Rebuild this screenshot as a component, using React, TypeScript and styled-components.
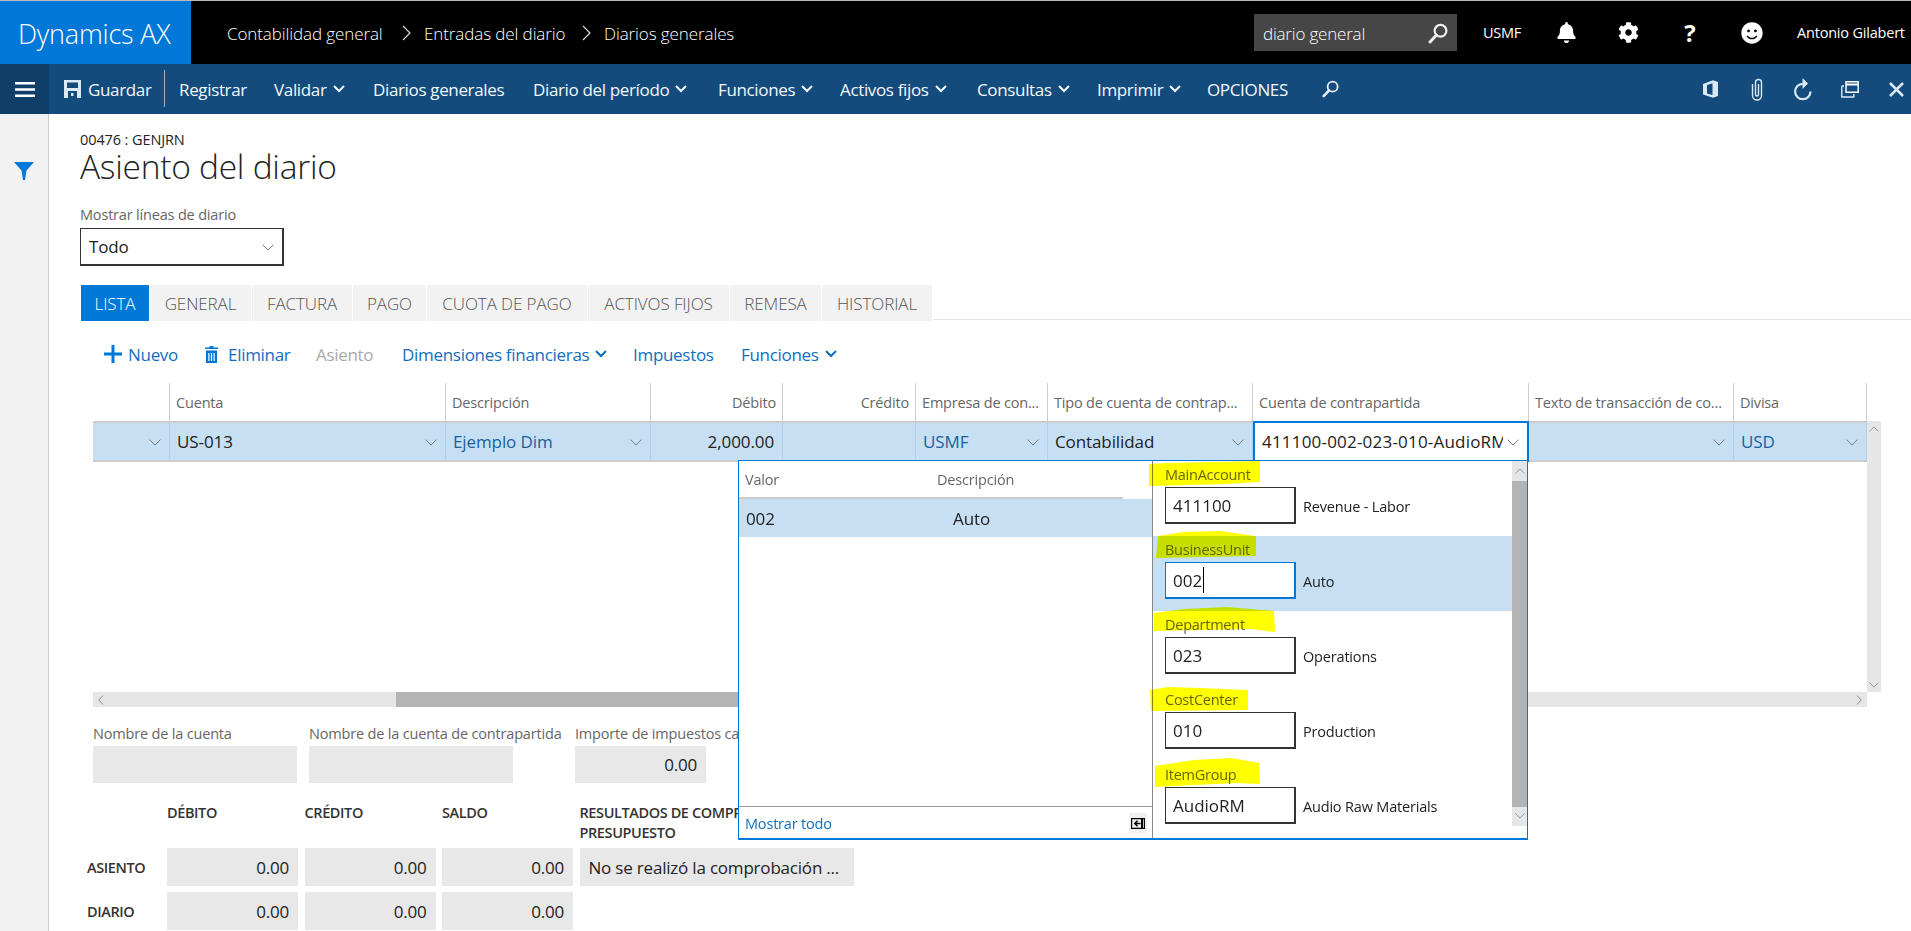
import React from 'react'
import { styled, createGlobalStyle } from 'styled-components'
import { FaBell, FaCog, FaSmile } from 'react-icons/fa'

const font = `'Open Sans', 'Noto Sans', 'Liberation Sans', sans-serif`
const blue = '#0078d7'
const link = '#106ebe'
const selected = '#c7dff3'
const navIcon = '#dbe9f7'

const GlobalStyle = createGlobalStyle`
  html, body {
    margin: 0;
    padding: 0;
    height: 931px;
    overflow: hidden;
    background: #fff;
    font-family: ${font};
    color: #222;
  }
  * { box-sizing: border-box; }
  svg { display: block; flex: none; }
`

/* barra superior */
const TopBar = styled.header`
  display: flex;
  align-items: stretch;
  height: 64px;
  background: #000;
  border-top: 1px solid #bbb;
  color: #fff;
`
const Logo = styled.div`
  width: 191px;
  display: flex;
  align-items: center;
  padding: 1px 0 0 18px;
  background: ${blue};
  font-size: 27px;
  font-weight: 300;
  letter-spacing: -0.2px;
  white-space: nowrap;
`
const Breadcrumb = styled.nav`
  display: flex;
  align-items: center;
  padding: 1px 0 0 36px;
  font-size: 17px;
  font-weight: 300;
  letter-spacing: -0.1px;
  white-space: nowrap;
`
const Crumb = styled.span<{ $w: number }>`
  width: ${(p) => p.$w}px;
`
const CrumbSep = styled.span`
  width: 36px;
  display: flex;
  justify-content: center;
`
const TopRight = styled.div`
  margin-left: auto;
  display: flex;
  align-items: center;
`
const SearchBox = styled.div`
  width: 203px;
  height: 37px;
  margin-right: 26px;
  padding: 1px 9px 0;
  display: flex;
  align-items: center;
  justify-content: space-between;
  background: #464646;
  font-size: 17px;
  font-weight: 300;
  letter-spacing: -0.2px;
`
const Company = styled.span`
  width: 52px;
  font-size: 14.5px;
  letter-spacing: -0.3px;
`
const TopIcon = styled.span`
  width: 62px;
  display: flex;
  justify-content: center;
  font-size: 24px;
  font-weight: 700;
  line-height: 1;
`
const UserName = styled.span`
  width: 128px;
  padding-left: 14px;
  font-size: 14.5px;
  letter-spacing: -0.2px;
  white-space: nowrap;
`

/* barra de comandos */
const CommandBar = styled.div`
  display: flex;
  align-items: stretch;
  height: 50px;
  background: #124b7c;
  color: #f4f8fc;
  font-size: 17px;
  letter-spacing: -0.35px;
  white-space: nowrap;
`
const MenuTile = styled.div`
  width: 49px;
  display: flex;
  align-items: center;
  justify-content: center;
  background: #0f3f69;
`
const SaveGroup = styled.div`
  display: flex;
  align-items: center;
  gap: 7px;
  padding: 0 14px 0 15px;
  width: 115px;
`
const BarDivider = styled.div`
  width: 1px;
  margin: 6px 0 7px;
  background: #9db5cb;
`
const Commands = styled.div`
  display: flex;
  align-items: center;
  padding-left: 14px;
`
const Command = styled.span<{ $w: number }>`
  width: ${(p) => p.$w}px;
  display: flex;
  align-items: center;
  gap: 6px;
`
const WindowTools = styled.div`
  margin-left: auto;
  display: flex;
  align-items: center;
  gap: 16.3px;
`
const ToolSlot = styled.span`
  width: 30px;
  display: flex;
  justify-content: center;
`

/* cuerpo */
const Body = styled.div`
  display: flex;
  height: 817px;
  overflow: hidden;
`
const Sidebar = styled.aside`
  width: 49px;
  flex: none;
  padding: 48px 0 0 14px;
  background: #f2f2f2;
  border-right: 1px solid #ccc;
`
const Main = styled.main`
  flex: 1;
  min-width: 0;
  padding-top: 17px;
`
const Head = styled.div`
  padding-left: 31px;
`
const RecordId = styled.div`
  font-size: 14.5px;
  line-height: 18px;
  letter-spacing: -0.1px;
`
const Title = styled.h1`
  margin: 0;
  font-size: 33.5px;
  font-weight: 300;
  line-height: 34px;
  letter-spacing: -0.25px;
`
const FieldLabel = styled.div`
  color: #666;
  font-size: 14.5px;
  line-height: 20px;
  letter-spacing: -0.18px;
  white-space: nowrap;
`
const FilterLabel = styled(FieldLabel)`
  margin-top: 22px;
`
const FilterSelect = styled.div`
  width: 204px;
  height: 38px;
  margin-top: 3px;
  padding: 0 8px 0 8px;
  display: flex;
  align-items: center;
  justify-content: space-between;
  border: 1px solid #333;
  border-width: 1px 2px 2px 1px;
  font-size: 17px;
  letter-spacing: -0.2px;
`
const TabStrip = styled.div`
  display: flex;
  width: 1831px;
  height: 36px;
  margin: 19px 0 0 32px;
  gap: 1px;
`
const Tab = styled.div<{ $w: number; $active?: boolean }>`
  width: ${(p) => p.$w}px;
  display: flex;
  align-items: center;
  justify-content: center;
  background: ${(p) => (p.$active ? blue : '#f2f2f2')};
  color: ${(p) => (p.$active ? '#fff' : '#555')};
  font-size: 17px;
  font-weight: 300;
  letter-spacing: -0.1px;
  white-space: nowrap;
`
const TabRule = styled.div`
  flex: 1;
  align-self: flex-end;
  height: 1px;
  margin-bottom: 1px;
  background: #e6e6e6;
`
const ActionBar = styled.div`
  display: flex;
  align-items: center;
  height: 36px;
  margin: 15px 0 0 55px;
  color: ${link};
  font-size: 17px;
  letter-spacing: -0.3px;
  white-space: nowrap;
`
const Action = styled.span<{ $w: number; $off?: boolean; $gap?: number }>`
  width: ${(p) => p.$w}px;
  display: flex;
  align-items: center;
  gap: ${(p) => p.$gap ?? 6}px;
  color: ${(p) => (p.$off ? '#aaa' : 'inherit')};
`

/* rejilla */
const columns = '77px 276px 205px 132px 133px 132px 205px 276px 205px 133px'

const GridFrame = styled.div`
  position: relative;
  width: 1788px;
  margin: 11px 0 0 44px;
`
const GridHeader = styled.div`
  display: grid;
  grid-template-columns: ${columns};
  height: 38px;
  width: 1774px;
`
const HeadCell = styled.div<{ $right?: boolean }>`
  display: flex;
  align-items: center;
  justify-content: ${(p) => (p.$right ? 'flex-end' : 'flex-start')};
  padding: 0 6px;
  border-right: 1px solid #ccc;
  color: #666;
  font-size: 14.5px;
  letter-spacing: -0.18px;
  white-space: nowrap;
  overflow: hidden;
`
const GridBody = styled.div`
  display: flex;
  height: 271px;
`
const GridRows = styled.div`
  width: 1774px;
`
const Row = styled.div`
  display: grid;
  grid-template-columns: ${columns};
  height: 41px;
  background: ${selected};
  border-top: 2px solid #ccc;
  border-bottom: 2px solid #ccc;
`
const Cell = styled.div<{ $active?: boolean; $link?: boolean; $right?: boolean }>`
  display: flex;
  align-items: center;
  justify-content: ${(p) => (p.$right ? 'flex-end' : 'space-between')};
  gap: 4px;
  min-width: 0;
  padding: 0 8px 0 7px;
  border-right: 1px solid #b5cfe5;
  color: ${(p) => (p.$link ? '#1a5f9e' : '#222')};
  font-size: 17px;
  letter-spacing: -0.1px;
  white-space: nowrap;
  ${(p) => p.$active && `
    margin: -2px 0;
    background: #fff;
    border: 2px solid ${blue};
    padding-left: 7px;
    letter-spacing: 0.2px;
  `}
`
const CellText = styled.span`
  flex: 1;
  min-width: 0;
  overflow: hidden;
`
const DropSlot = styled.span`
  padding-top: 3px;
  flex: none;
`
const VScroll = styled.div`
  width: 14px;
  height: 100%;
  padding: 5px 0 4px;
  background: #e6e6e6;
  display: flex;
  flex-direction: column;
  align-items: center;
  justify-content: space-between;
`
const HScroll = styled.div`
  display: flex;
  align-items: center;
  justify-content: space-between;
  width: 1774px;
  height: 15px;
  padding: 0 5px;
  background: linear-gradient(to right, #e6e6e6 303px, #b4b4b4 303px, #b4b4b4 1100px, #e6e6e6 1100px);
`

/* pie */
const NameFields = styled.div`
  display: grid;
  grid-template-columns: 204px 204px 181px;
  column-gap: 12px;
  margin: 17px 0 0 44px;
  & > div:last-child {
    margin-left: 50px;
    width: 131px;
  }
`
const ReadOnly = styled.div`
  height: 37px;
  margin-top: 2px;
  padding: 0 9px;
  display: flex;
  align-items: center;
  justify-content: flex-end;
  background: #e8e8e8;
  font-size: 17px;
  letter-spacing: -0.2px;
  white-space: nowrap;
  overflow: hidden;
`
const Totals = styled.div`
  display: grid;
  grid-template-columns: 73.5px 131px 131px 131px 274px;
  column-gap: 6.5px;
  row-gap: 6px;
  margin: 20px 0 0 38px;
  width: 780px;
`
const TotalHead = styled.div`
  height: 40px;
  margin-bottom: -1px;
  color: #333;
  font-size: 14.5px;
  font-weight: 600;
  line-height: 20px;
  letter-spacing: -0.4px;
`
const TotalLabel = styled.div`
  display: flex;
  align-items: center;
  color: #333;
  font-size: 14.5px;
  font-weight: 600;
  letter-spacing: -0.4px;
`
const TotalBox = styled(ReadOnly)<{ $left?: boolean }>`
  height: 38px;
  margin-top: 0;
  justify-content: ${(p) => (p.$left ? 'flex-start' : 'flex-end')};
`

/* desplegable de dimensiones */
const Flyout = styled.div`
  position: absolute;
  z-index: 5;
  left: 645px;
  top: 77px;
  width: 790px;
  height: 380px;
  display: flex;
  background: #fff;
  border: 1px solid ${blue};
  border-bottom-width: 2px;
`
const LookupPane = styled.div`
  width: 414px;
  display: flex;
  flex-direction: column;
  border-right: 1px solid #888;
`
const LookupHead = styled.div`
  display: grid;
  grid-template-columns: 192px 1fr;
  width: 384px;
  height: 38px;
  padding: 9px 0 0 6px;
  border-bottom: 2px solid #ccc;
  color: #666;
  font-size: 14.5px;
  letter-spacing: -0.18px;
`
const LookupRow = styled.div`
  display: grid;
  grid-template-columns: 207px 1fr;
  height: 38px;
  align-items: center;
  padding-left: 7px;
  background: ${selected};
  font-size: 17px;
  letter-spacing: -0.1px;
`
const LookupFoot = styled.div`
  margin-top: auto;
  height: 32px;
  display: flex;
  align-items: center;
  justify-content: space-between;
  padding: 1px 5px 0 6px;
  border-top: 1px solid #999;
  color: ${link};
  font-size: 14.5px;
  letter-spacing: -0.18px;
`
const PinButton = styled.span`
  width: 18px;
  height: 20px;
  display: flex;
  align-items: center;
  justify-content: center;
  background: #f0f0f0;
`
const SegmentPane = styled.div`
  position: relative;
  flex: 1;
  display: flex;
`
const Segments = styled.div`
  flex: 1;
  min-width: 0;
`
const Segment = styled.div<{ $current?: boolean }>`
  height: 75px;
  padding: 4px 0 0 12px;
  background: ${(p) => (p.$current ? selected : 'transparent')};
`
const SegmentLabel = styled.div`
  color: #666;
  font-size: 14.5px;
  line-height: 20px;
  letter-spacing: -0.25px;
`
const SegmentRow = styled.div`
  display: flex;
  align-items: center;
  gap: 7px;
  margin-top: 2px;
`
const SegmentInput = styled.div<{ $current?: boolean }>`
  width: 131px;
  height: 37px;
  padding: 0 7px;
  display: flex;
  align-items: center;
  background: #fff;
  border: 1px solid ${(p) => (p.$current ? blue : '#333')};
  border-width: 1px 2px 2px 1px;
  font-size: 17px;
  letter-spacing: 0;
`
const Caret = styled.span`
  width: 1px;
  height: 26px;
  margin-left: 1px;
  background: #000;
`
const SegmentName = styled.span`
  padding-top: 2px;
  font-size: 14.5px;
  letter-spacing: -0.18px;
`
const PaneScroll = styled.div`
  width: 15px;
  height: 365px;
  display: flex;
  flex-direction: column;
  background: #e6e6e6;
`
const PaneThumb = styled.div`
  height: 326px;
  background: #b4b4b4;
`
const ArrowSlot = styled.div`
  flex: 1;
  display: flex;
  align-items: center;
  justify-content: center;
`
const Marker = styled.svg`
  position: absolute;
  left: -4px;
  top: 0;
  mix-blend-mode: multiply;
  pointer-events: none;
`

/* iconos */
const Chevron = ({ color = '#777', size = 12 }: { color?: string; size?: number }) => (
  <svg width={size} height={size * 0.6} viewBox="0 0 12 7">
    <path d="M.5.5 6 6l5.5-5.5" fill="none" stroke={color} strokeWidth="1" />
  </svg>
)
const ChevronUp = () => (
  <svg width="10" height="6" viewBox="0 0 12 7">
    <path d="M.5 6.5 6 1l5.5 5.500" fill="none" stroke="#888" strokeWidth="1" />
  </svg>
)
const BoldChevron = ({ color = '#f4f8fc' }: { color?: string }) => (
  <svg width="12" height="8" viewBox="0 0 12 8">
    <path d="M1 1l5 5 5-5" fill="none" stroke={color} strokeWidth="2" />
  </svg>
)
const CrumbArrow = () => (
  <svg width="9" height="16" viewBox="0 0 9 16">
    <path d="M1 1l7 7-7 7" fill="none" stroke="#ddd" strokeWidth="1.2" />
  </svg>
)
const Magnifier = ({ color = '#eee', size = 20 }: { color?: string; size?: number }) => (
  <svg width={size} height={size * 1.05} viewBox="0 0 20 21">
    <circle cx="12.5" cy="7.8" r="5.9" fill="none" stroke={color} strokeWidth="2.2" />
    <path d="M8.3 12.2 2 19" stroke={color} strokeWidth="3" strokeLinecap="round" />
  </svg>
)
const Hamburger = () => (
  <svg width="20" height="15" viewBox="0 0 20 15">
    <path d="M0 1.2h20M0 7.5h20M0 13.8h20" stroke="#fff" strokeWidth="2.4" />
  </svg>
)
const SaveIcon = () => (
  <svg width="17" height="18" viewBox="0 0 17 18">
    <path
      fillRule="evenodd"
      fill={navIcon}
      d="M0 0h17v18H0zM3 2.5V8h11V2.5zM4 11v7h9v-7zM7 13v3h2.5v-3z"
    />
  </svg>
)
const OfficeIcon = () => (
  <svg width="15" height="18" viewBox="0 0 15 18">
    <path fillRule="evenodd" fill={navIcon} d="M0 4 10 .3l5 1.7v14l-5 1.7L0 14.5zM9.5 3.3 4 5v8.5l5.5 1.4z" />
  </svg>
)
const ClipIcon = () => (
  <svg width="12" height="23" viewBox="0 0 12 23">
    <path
      d="M7.5 6v10.5a1.5 1.5 0 0 1-3 0V4.5a3 3 0 0 1 6 0v13a4.5 4.5 0 0 1-9 0V6"
      fill="none"
      stroke={navIcon}
      strokeWidth="1.4"
    />
  </svg>
)
const RefreshIcon = () => (
  <svg width="20" height="23" viewBox="0 0 20 23">
    <path d="M17.5 13.5a7.7 7.7 0 1 1-7.7-7.7" fill="none" stroke={navIcon} strokeWidth="2.2" />
    <path d="M9.5 0l5.5 5.5-5.5 5.5z" fill={navIcon} />
  </svg>
)
const WindowIcon = () => (
  <svg width="18" height="17" viewBox="0 0 18 17">
    <path d="M5 .8h12.2v10.5H5z" fill="none" stroke="#fff" strokeWidth="1.5" />
    <path d="M5 2.5h12v2H5z" fill="#fff" />
    <path d="M.8 5v11h12V13M.8 5H3" fill="none" stroke={navIcon} strokeWidth="1.4" />
  </svg>
)
const CloseIcon = () => (
  <svg width="15" height="15" viewBox="0 0 15 15">
    <path d="M1 1l13 13M14 1 1 14" stroke={navIcon} strokeWidth="2.6" />
  </svg>
)
const FunnelIcon = () => (
  <svg width="20" height="18" viewBox="0 0 20 18">
    <path d="M0 0h20l-7.5 8.5-1.5 9.5H9L7.5 8.5z" fill={blue} />
  </svg>
)
const PlusIcon = () => (
  <svg width="18" height="18" viewBox="0 0 18 18">
    <path d="M9 0v18M0 9h18" stroke={blue} strokeWidth="3" />
  </svg>
)
const TrashIcon = () => (
  <svg width="13" height="17" viewBox="0 0 13 17">
    <path
      fillRule="evenodd"
      fill={blue}
      d="M4.5 0h4v1.5H13V3H0V1.5h4.5zM1 4.5h11V17H1zM3.3 7v8h1.2V7zM5.9 7v8h1.2V7zM8.5 7v8h1.2V7z"
    />
  </svg>
)
const PinIcon = () => (
  <svg width="14" height="11" viewBox="0 0 14 11">
    <path d="M.6.6h12.8v9.8H.6z" fill="none" stroke="#000" strokeWidth="1.2" />
    <path d="M11 1v9" stroke="#000" strokeWidth="2" />
    <path d="M9.5 5.5H4M6.5 2.8 3.800 5.500l2.700 2.700" fill="none" stroke="#000" strokeWidth="1.5" />
  </svg>
)
const DropMark = () => (
  <DropSlot>
    <Chevron />
  </DropSlot>
)

const tabs: [string, number][] = [
  ['LISTA', 68],
  ['GENERAL', 101],
  ['FACTURA', 100],
  ['PAGO', 73],
  ['CUOTA DE PAGO', 160],
  ['ACTIVOS FIJOS', 141],
  ['REMESA', 91],
  ['HISTORIAL', 110],
]

const commands: [string, number, boolean][] = [
  ['Registrar', 95, false],
  ['Validar', 99, true],
  ['Diarios generales', 160, false],
  ['Diario del período', 185, true],
  ['Funciones', 122, true],
  ['Activos fijos', 137, true],
  ['Consultas', 120, true],
  ['Imprimir', 110, true],
  ['OPCIONES', 115, false],
]

const headers: [string, boolean?][] = [
  [''],
  ['Cuenta'],
  ['Descripción'],
  ['Débito', true],
  ['Crédito', true],
  ['Empresa de con...'],
  ['Tipo de cuenta de contrap...'],
  ['Cuenta de contrapartida'],
  ['Texto de transacción de co...'],
  ['Divisa'],
]

const segments = [
  { label: 'MainAccount', value: '411100', name: 'Revenue - Labor' },
  { label: 'BusinessUnit', value: '002', name: 'Auto', current: true },
  { label: 'Department', value: '023', name: 'Operations' },
  { label: 'CostCenter', value: '010', name: 'Production' },
  { label: 'ItemGroup', value: 'AudioRM', name: 'Audio Raw Materials' },
]

const App = () => {
  return (
    <>
      <GlobalStyle />
      <TopBar>
        <Logo>Dynamics AX</Logo>
        <Breadcrumb>
          <Crumb $w={161}>Contabilidad general</Crumb>
          <CrumbSep>
            <CrumbArrow />
          </CrumbSep>
          <Crumb $w={144}>Entradas del diario</Crumb>
          <CrumbSep>
            <CrumbArrow />
          </CrumbSep>
          <Crumb $w={132}>Diarios generales</Crumb>
        </Breadcrumb>
        <TopRight>
          <SearchBox>
            diario general
            <Magnifier />
          </SearchBox>
          <Company>USMF</Company>
          <TopIcon>
            <FaBell size={21} />
          </TopIcon>
          <TopIcon>
            <FaCog size={21} />
          </TopIcon>
          <TopIcon>?</TopIcon>
          <TopIcon>
            <FaSmile size={22} />
          </TopIcon>
          <UserName>Antonio Gilabert</UserName>
        </TopRight>
      </TopBar>

      <CommandBar>
        <MenuTile>
          <Hamburger />
        </MenuTile>
        <SaveGroup>
          <SaveIcon />
          Guardar
        </SaveGroup>
        <BarDivider />
        <Commands>
          {commands.map(([text, w, more]) => (
            <Command key={text} $w={w}>
              {text}
              {more && <BoldChevron />}
            </Command>
          ))}
          <Magnifier color="#e8f0f8" size={17} />
        </Commands>
        <WindowTools>
          <ToolSlot>
            <OfficeIcon />
          </ToolSlot>
          <ToolSlot>
            <ClipIcon />
          </ToolSlot>
          <ToolSlot>
            <RefreshIcon />
          </ToolSlot>
          <ToolSlot>
            <WindowIcon />
          </ToolSlot>
          <ToolSlot>
            <CloseIcon />
          </ToolSlot>
        </WindowTools>
      </CommandBar>

      <Body>
        <Sidebar>
          <FunnelIcon />
        </Sidebar>
        <Main>
          <Head>
            <RecordId>00476 : GENJRN</RecordId>
            <Title>Asiento del diario</Title>
            <FilterLabel>Mostrar líneas de diario</FilterLabel>
            <FilterSelect>
              Todo
              <DropMark />
            </FilterSelect>
          </Head>

          <TabStrip>
            {tabs.map(([text, w], i) => (
              <Tab key={text} $w={w} $active={i === 0}>
                {text}
              </Tab>
            ))}
            <TabRule />
          </TabStrip>

          <ActionBar>
            <Action $w={101}>
              <PlusIcon />
              Nuevo
            </Action>
            <Action $w={111} $gap={10}>
              <TrashIcon />
              Eliminar
            </Action>
            <Action $w={86} $off>
              Asiento
            </Action>
            <Action $w={231}>
              Dimensiones financieras
              <BoldChevron color={link} />
            </Action>
            <Action $w={108}>Impuestos</Action>
            <Action $w={100}>
              Funciones
              <BoldChevron color={link} />
            </Action>
          </ActionBar>

          <GridFrame>
            <GridHeader>
              {headers.map(([text, right], i) => (
                <HeadCell key={i} $right={right}>
                  {text}
                </HeadCell>
              ))}
            </GridHeader>
            <GridBody>
              <GridRows>
                <Row>
                  <Cell $right>
                    <DropMark />
                  </Cell>
                  <Cell>
                    US-013
                    <DropMark />
                  </Cell>
                  <Cell $link>
                    Ejemplo Dim
                    <DropMark />
                  </Cell>
                  <Cell $right>2,000.00</Cell>
                  <Cell />
                  <Cell $link>
                    USMF
                    <DropMark />
                  </Cell>
                  <Cell>
                    Contabilidad
                    <DropMark />
                  </Cell>
                  <Cell $active>
                    <CellText>411100-002-023-010-AudioRM</CellText>
                    <DropMark />
                  </Cell>
                  <Cell $right>
                    <DropMark />
                  </Cell>
                  <Cell $link>
                    USD
                    <DropMark />
                  </Cell>
                </Row>
              </GridRows>
              <VScroll>
                <ChevronUp />
                <Chevron color="#888" size={10} />
              </VScroll>
            </GridBody>
            <HScroll>
              <svg width="6" height="10" viewBox="0 0 6 10">
                <path d="M5 .5.8 5 5 9.5" fill="none" stroke="#888" />
              </svg>
              <svg width="6" height="10" viewBox="0 0 6 10">
                <path d="M1 .5 5.2 5 1 9.5" fill="none" stroke="#888" />
              </svg>
            </HScroll>

            <Flyout>
              <LookupPane>
                <LookupHead>
                  <span>Valor</span>
                  <span>Descripción</span>
                </LookupHead>
                <LookupRow>
                  <span>002</span>
                  <span>Auto</span>
                </LookupRow>
                <LookupFoot>
                  Mostrar todo
                  <PinButton>
                    <PinIcon />
                  </PinButton>
                </LookupFoot>
              </LookupPane>
              <SegmentPane>
                <Segments>
                  {segments.map((s) => (
                    <Segment key={s.label} $current={s.current}>
                      <SegmentLabel>{s.label}</SegmentLabel>
                      <SegmentRow>
                        <SegmentInput $current={s.current}>
                          {s.value}
                          {s.current && <Caret />}
                        </SegmentInput>
                        <SegmentName>{s.name}</SegmentName>
                      </SegmentRow>
                    </Segment>
                  ))}
                </Segments>
                <PaneScroll>
                  <ArrowSlot>
                    <ChevronUp />
                  </ArrowSlot>
                  <PaneThumb />
                  <ArrowSlot>
                    <Chevron color="#888" size={10} />
                  </ArrowSlot>
                </PaneScroll>
                {/* marcas de rotulador */}
                <Marker width="130" height="378" viewBox="0 0 130 378">
                  <g fill="#ffff00">
                    <path d="M0 3 17 2 111 0V21L78 23 0 25Z" />
                    <path d="M9 75 35 71 71 70 107 75V95L7 97Z" />
                    <path d="M5 152 35 148 78 146 125 150 126 171 102 168 5 170Z" />
                    <path d="M1 229 19 226 51 227 99 229V249L2 250Z" />
                    <path d="M6 305 45 299 82 297 110 302 111 323 87 322 6 326Z" />
                  </g>
                </Marker>
              </SegmentPane>
            </Flyout>
          </GridFrame>

          <NameFields>
            <div>
              <FieldLabel>Nombre de la cuenta</FieldLabel>
              <ReadOnly />
            </div>
            <div>
              <FieldLabel>Nombre de la cuenta de contrapartida</FieldLabel>
              <ReadOnly />
            </div>
            <div>
              <FieldLabel>Importe de impuestos calculado</FieldLabel>
              <ReadOnly>0.00</ReadOnly>
            </div>
          </NameFields>

          <Totals>
            <span />
            <TotalHead>DÉBITO</TotalHead>
            <TotalHead>CRÉDITO</TotalHead>
            <TotalHead>SALDO</TotalHead>
            <TotalHead>RESULTADOS DE COMPROBACIÓN DE PRESUPUESTO</TotalHead>

            <TotalLabel>ASIENTO</TotalLabel>
            <TotalBox>0.00</TotalBox>
            <TotalBox>0.00</TotalBox>
            <TotalBox>0.00</TotalBox>
            <TotalBox $left>No se realizó la comprobación ...</TotalBox>

            <TotalLabel>DIARIO</TotalLabel>
            <TotalBox>0.00</TotalBox>
            <TotalBox>0.00</TotalBox>
            <TotalBox>0.00</TotalBox>
          </Totals>
        </Main>
      </Body>
    </>
  )
}

export default App
